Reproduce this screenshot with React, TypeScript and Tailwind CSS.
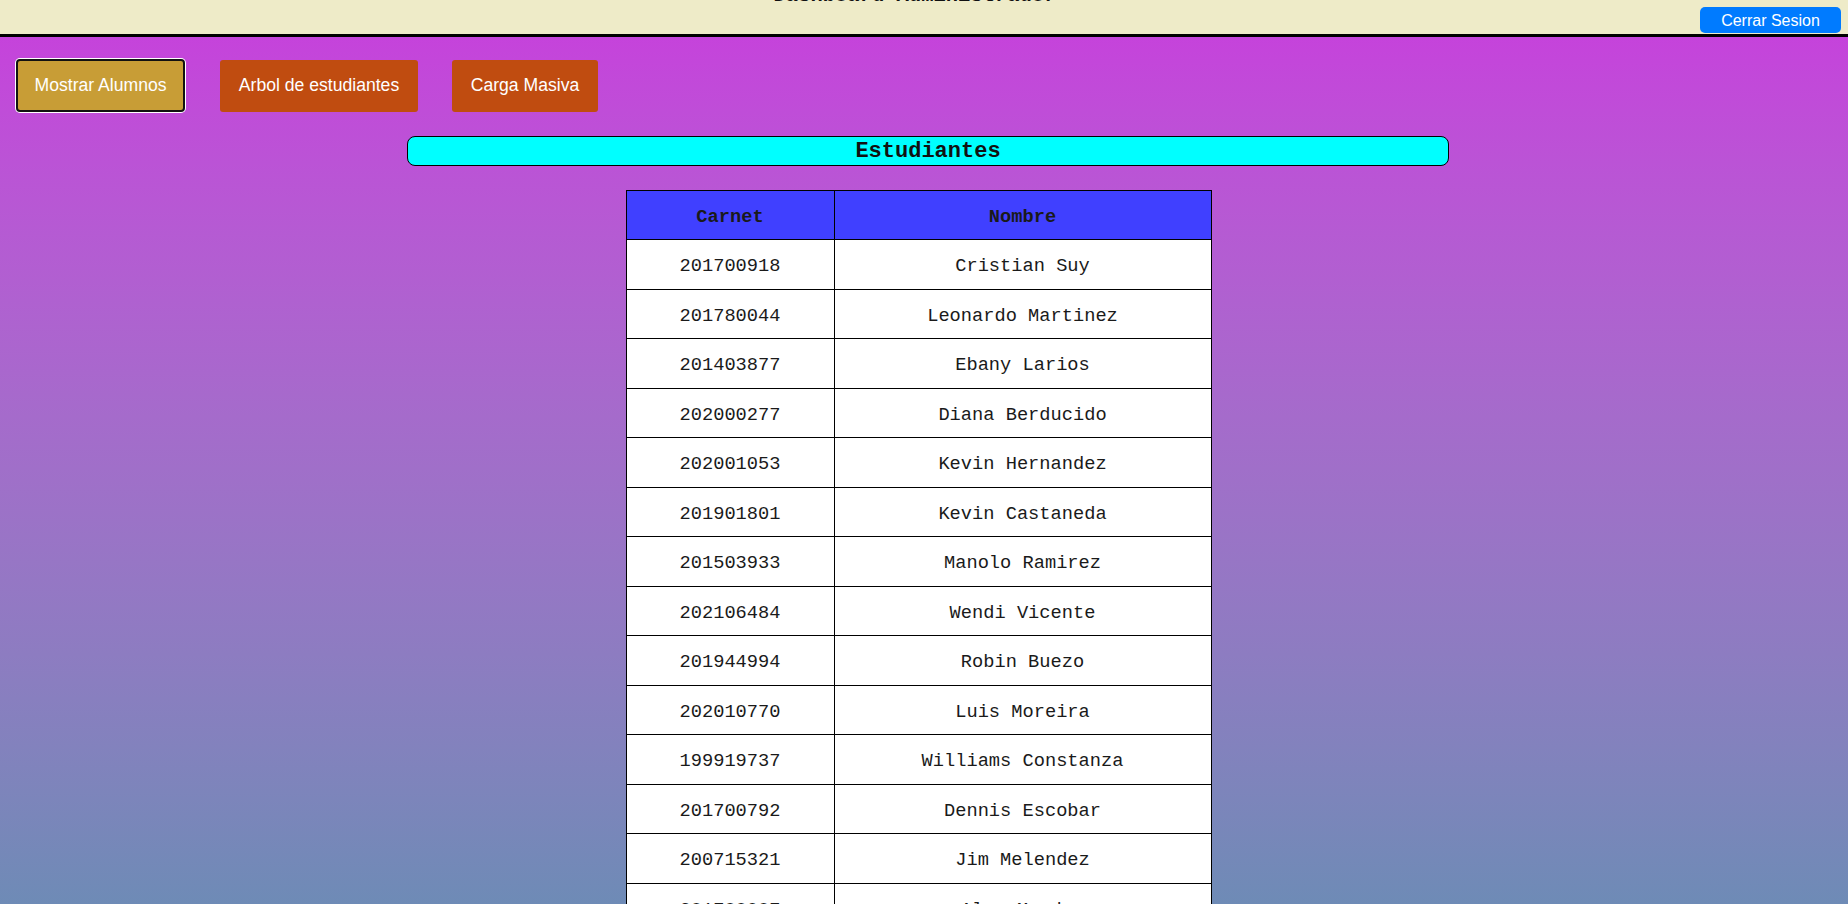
import React from "react";

const students: [string, string][] = [
  ["201700918", "Cristian Suy"],
  ["201780044", "Leonardo Martinez"],
  ["201403877", "Ebany Larios"],
  ["202000277", "Diana Berducido"],
  ["202001053", "Kevin Hernandez"],
  ["201901801", "Kevin Castaneda"],
  ["201503933", "Manolo Ramirez"],
  ["202106484", "Wendi Vicente"],
  ["201944994", "Robin Buezo"],
  ["202010770", "Luis Moreira"],
  ["199919737", "Williams Constanza"],
  ["201700792", "Dennis Escobar"],
  ["200715321", "Jim Melendez"],
  ["201700807", "Alan Mendez"],
  ["201612345", "Pedro Lopez"],
];

const mono = "font-['Liberation_Mono','DejaVu_Sans_Mono',monospace]";
const arial = "font-['Liberation_Sans',Arial,sans-serif]";

export default function App() {
  return (
    <div className="h-[904px] overflow-hidden">
      <header className="flex h-[37px] flex-col border-b-[3px] border-black bg-[#eeebc8]">
        <h1 className={`-mt-[14px] h-[20px] shrink-0 pr-[18px] text-center text-[20.5px] font-bold leading-[20px] text-[#111] ${mono}`}>
          Dashboard Administrador
        </h1>
        <div className="mt-[1px] flex justify-end pr-[7px]">
          <button
            type="button"
            className={`h-[26px] w-[141px] rounded-[5px] bg-[#007bff] pt-[2px] text-[16px] leading-[24px] text-white ${arial}`}
          >
            Cerrar Sesion
          </button>
        </div>
      </header>

      <main className="h-[867px] overflow-hidden bg-gradient-to-b from-[#c543db] to-[#6e8bb6]">
        <div className={`flex items-center pl-[16px] pt-[22px] text-[17.6px] text-white ${arial}`}>
          <button
            type="button"
            className="h-[53px] w-[169px] rounded-[4px] border-2 border-[#111] bg-[#c89d36] ring-1 ring-white"
          >
            Mostrar Alumnos
          </button>
          <button type="button" className="ml-[35px] h-[52px] w-[198px] rounded-[3px] bg-[#c04c10]">
            Arbol de estudiantes
          </button>
          <button type="button" className="ml-[34px] h-[52px] w-[146px] rounded-[3px] bg-[#c04c10]">
            Carga Masiva
          </button>
        </div>

        <div className="mt-[24px] pl-[407px] pr-[399px]">
          <h2
            className={`h-[30px] rounded-[8px] border border-black bg-[#00ffff] pt-[2px] text-center text-[22px] font-bold leading-[26px] text-[#111] ${mono}`}
          >
            Estudiantes
          </h2>
        </div>

        <div className="mt-[24px] flex justify-center pr-[11px]">
          <table className={`border-collapse text-[18.7px] text-[#1a1a1a] ${mono}`}>
            <thead>
              <tr className="h-[49px] bg-[#4040ff]">
                <th className="w-[208px] border border-black pt-[4px] font-bold">Carnet</th>
                <th className="w-[377px] border border-black pt-[4px] font-bold">Nombre</th>
              </tr>
            </thead>
            <tbody>
              {students.map(([carnet, nombre]) => (
                <tr key={carnet} className="h-[49.5px] bg-white">
                  <td className="border border-black pt-[4px] text-center">{carnet}</td>
                  <td className="border border-black pt-[4px] text-center">{nombre}</td>
                </tr>
              ))}
            </tbody>
          </table>
        </div>
      </main>
    </div>
  );
}
